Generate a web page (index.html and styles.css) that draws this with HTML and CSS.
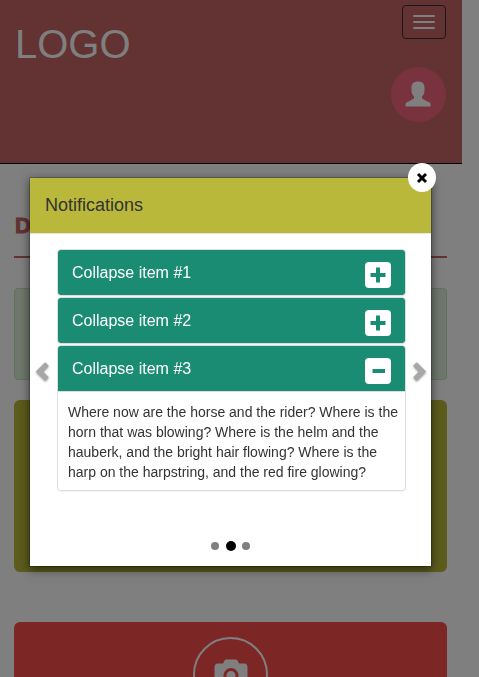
FILE: index.html
```html
<!DOCTYPE html>
<html lang="en">
<head>
<meta charset="utf-8">
<title>Notifications</title>
<link rel="stylesheet" href="styles.css">
</head>
<body>
<div class="page">
  <header class="top">
    <div class="logo">LOGO</div>
    <div class="tools">
      <button class="toggle" aria-label="Menu"><span></span><span></span><span></span></button>
      <div class="avatar">
        <svg width="26" height="26" viewBox="0 0 26 26"><path d="M13 0.500C17 .5 19.500 2.500 19.500 6.500V9.500C19.500 12 18.500 14 17 15.500V17C17.500 18 19 18.500 20.500 19.500L24.500 21.500Q25.500 22 25.500 23.500V25.500H.5V23.500Q.5 22 1.500 21.500L5.500 19.500C7 18.500 8.500 18 9 17V15.500C7.500 14 6.500 12 6.500 9.500V6.500C6.500 2.500 9 .5 13 .5z"/></svg>
      </div>
    </div>
  </header>
  <main class="content">
    <h1>D</h1>
    <div class="alert"></div>
    <div class="tile olive"></div>
    <div class="tile red">
      <div class="ring">
        <svg width="34" height="30" viewBox="0 0 34 30"><path fill-rule="evenodd" d="M4 4.500h5l1.500-3q.8-1 2-1h9q1.200 0 2 1L25 4.500h5q3.500 0 3.500 4v17q0 4-4 4h-25Q.5 29.500 .5 25.500V8.500Q.5 4.500 4 4.500zM17 9a7.500 7.500 0 1 0 0 15a7.500 7.500 0 0 0 0-15zm0 3a4.500 4.500 0 1 1 0 9a4.500 4.500 0 0 1 0-9z"/></svg>
      </div>
    </div>
  </main>
</div>
<div class="backdrop"></div>
<div class="modal">
  <button class="close" aria-label="Close"><svg width="12" height="12" viewBox="0 0 12 12"><path d="M2 2l8 8M10 2l-8 8"/></svg></button>
  <div class="modal-head">Notifications</div>
  <div class="carousel">
    <svg class="arrow" width="16" height="22" viewBox="0 0 16 22"><path d="M12 3L4.500 10.500L12 18"/></svg>
    <div class="panels">
      <section class="panel">
        <div class="heading"><span class="label">Collapse item #1</span><span class="sign"><svg width="16" height="16" viewBox="0 0 16 16"><path d="M.5 8h15M8 .5v15"/></svg></span></div>
      </section>
      <section class="panel">
        <div class="heading"><span class="label">Collapse item #2</span><span class="sign"><svg width="16" height="16" viewBox="0 0 16 16"><path d="M.5 8h15M8 .5v15"/></svg></span></div>
      </section>
      <section class="panel">
        <div class="heading"><span class="label">Collapse item #3</span><span class="sign"><svg width="16" height="16" viewBox="0 0 16 16"><path d="M2.500 8h12.500"/></svg></span></div>
        <p>Where now are the horse and the rider? Where is the horn that was blowing? Where is the helm and the hauberk, and the bright hair flowing? Where is the harp on the harpstring, and the red fire glowing?</p>
      </section>
    </div>
    <svg class="arrow" width="16" height="22" viewBox="0 0 16 22"><path d="M4 3L11.500 10.500L4 18"/></svg>
  </div>
  <div class="dots"><i></i><i class="active"></i><i></i></div>
</div>
</body>
</html>
```
FILE: styles.css
```css
* { box-sizing: border-box; }
body {
  margin: 0;
  height: 677px;
  overflow: hidden;
  background: #fff;
  color: #333;
  font: 14px/20px "Liberation Sans", Arial, sans-serif;
}
svg { display: block; }
button { padding: 0; font: inherit; }
.page { width: 462px; height: 677px; overflow: hidden; }
.top {
  display: flex;
  justify-content: space-between;
  height: 164px;
  padding: 5px 16px 0 15px;
  background: #c66464;
  border-bottom: 1px solid #000;
}
.logo { padding-top: 16px; color: #fff; font-size: 40px; line-height: 46px; }
.tools { display: flex; flex-direction: column; align-items: flex-end; gap: 28px; }
.toggle {
  display: flex;
  flex-direction: column;
  align-items: center;
  justify-content: center;
  gap: 4px;
  width: 44px;
  height: 34px;
  background: none;
  border: 1px solid #333;
  border-radius: 4px;
}
.toggle span { width: 22px; height: 2px; border-radius: 1px; background: #fff; }
.avatar {
  display: flex;
  align-items: center;
  justify-content: center;
  width: 55px;
  height: 55px;
  padding: 0 1px 2px 0;
  border-radius: 50%;
  background: #f3667c;
  fill: #fff;
}
.content { padding: 50px 15px 0 14px; }
h1 {
  height: 44px;
  margin: 0 0 30px;
  padding-left: 1px;
  border-bottom: 2px solid #c66464;
  color: #c66464;
  font: 900 22px/24px "Liberation Sans", Arial, sans-serif;
  -webkit-text-stroke: 1px #c66464;
}
.alert {
  height: 92px;
  background: #dff0d8;
  border: 1px solid #c6dfb8;
  border-radius: 4px;
}
.tile { border-radius: 6px; }
.olive { height: 172px; margin: 20px 0 50px; background: #b9b83a; }
.red {
  display: flex;
  justify-content: center;
  height: 180px;
  padding-top: 15px;
  background: #fa4c4c;
}
.ring {
  display: flex;
  align-items: center;
  justify-content: center;
  width: 75px;
  height: 75px;
  padding-bottom: 2px;
  border: 2px solid #fff;
  border-radius: 50%;
  fill: #fff;
}
.backdrop { position: fixed; inset: 0; background: rgba(0, 0, 0, .5); }
.modal {
  position: absolute;
  left: 29px;
  top: 177px;
  width: 403px;
  height: 390px;
  background: #fff;
  background-clip: padding-box;
  border: 1px solid rgba(0, 0, 0, .2);
  box-shadow: 0 3px 9px rgba(0, 0, 0, .5);
}
.close {
  position: absolute;
  top: -15px;
  right: -5px;
  display: flex;
  align-items: center;
  justify-content: center;
  width: 28px;
  height: 29px;
  border: 0;
  border-radius: 50%;
  background: #fff;
}
.close path { stroke: #000; stroke-width: 3; }
.modal-head {
  height: 56px;
  padding: 15px;
  background: #b9b83a;
  border-bottom: 1px solid #e5e5e5;
  font-size: 18px;
  line-height: 24px;
}
.carousel {
  display: flex;
  align-items: center;
  justify-content: space-between;
  padding: 15px 4px 0 5px;
  height: 292px;
}
.arrow {
  flex: none;
  margin-bottom: 32px;
  fill: none;
  stroke: #a7a7a7;
  stroke-width: 5;
  filter: drop-shadow(0 1px 1px rgba(0, 0, 0, .45));
}
.panels { align-self: flex-start; width: 349px; margin-left: 1px; }
.panel {
  margin-bottom: 1px;
  overflow: hidden;
  border: 1px solid #ddd;
  border-radius: 4px;
  box-shadow: 0 1px 1px rgba(0, 0, 0, .05);
}
.heading {
  display: flex;
  justify-content: space-between;
  height: 45px;
  padding: 12px 14px 0;
  background: #1a8c74;
  color: #fff;
  font-size: 16px;
  line-height: 20px;
}
.label { padding-top: 1px; }
.sign {
  display: flex;
  align-items: center;
  justify-content: center;
  width: 26px;
  height: 26px;
  border-radius: 4px;
  background: #fff;
}
.sign path { stroke: #1a8c74; stroke-width: 4; }
.panel p {
  margin: 0;
  padding: 10px 0 8px 10px;
  border-top: 1px solid #ddd;
}
.dots { display: flex; justify-content: center; align-items: center; gap: 6.5px; height: 40px; }
.dots i { width: 8px; height: 8px; border-radius: 50%; background: #808080; }
.dots .active { width: 10px; height: 10px; background: #000; }
```
